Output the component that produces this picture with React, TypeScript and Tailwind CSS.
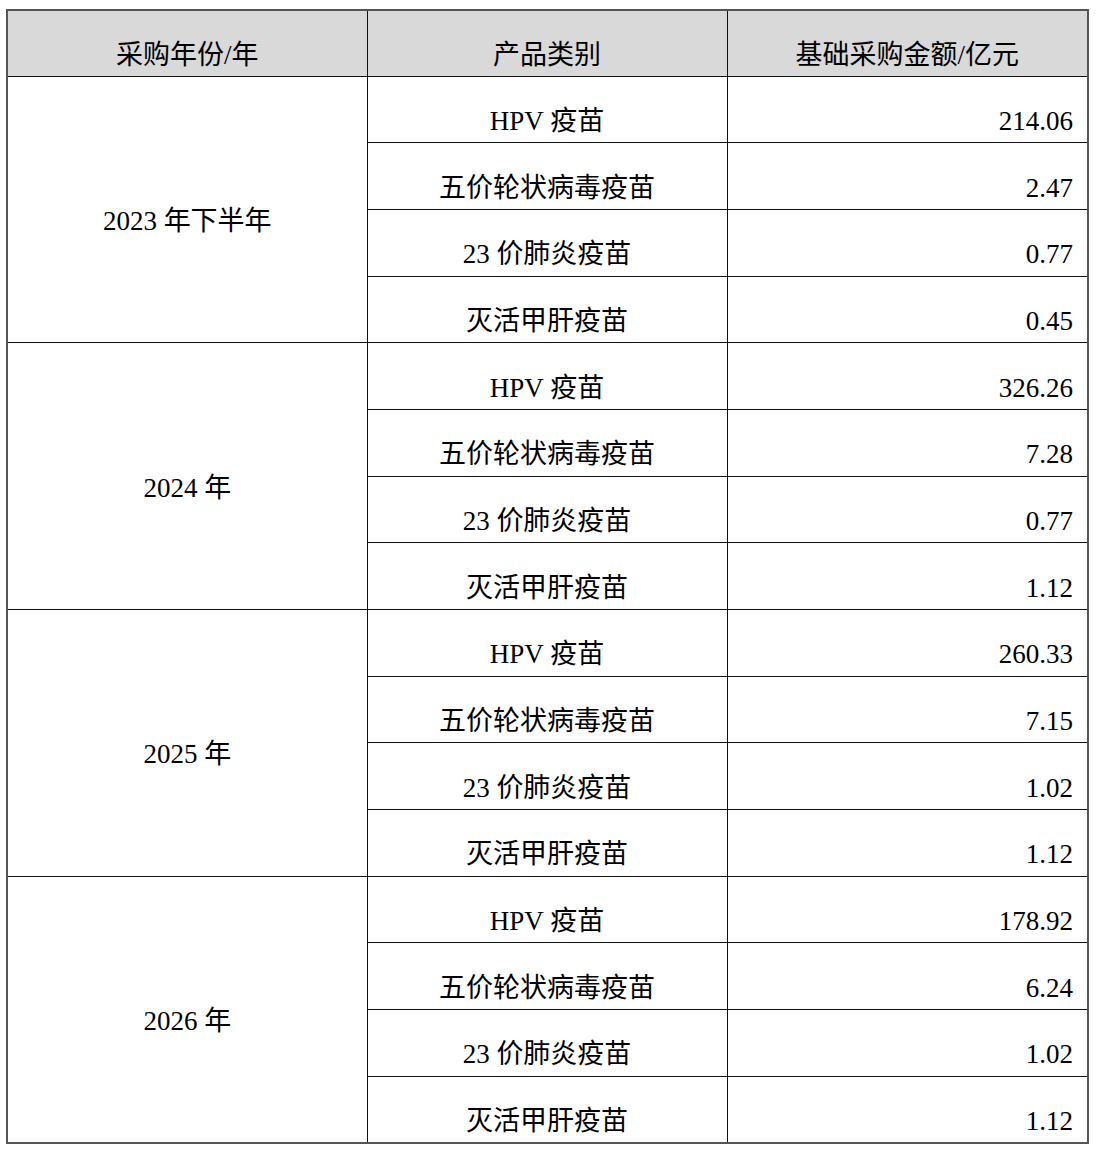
const data = [
  { year: '2023 年下半年', rows: ['214.06', '2.47', '0.77', '0.45'] },
  { year: '2024 年', rows: ['326.26', '7.28', '0.77', '1.12'] },
  { year: '2025 年', rows: ['260.33', '7.15', '1.02', '1.12'] },
  { year: '2026 年', rows: ['178.92', '6.24', '1.02', '1.12'] },
]

const products = ['HPV 疫苗', '五价轮状病毒疫苗', '23 价肺炎疫苗', '灭活甲肝疫苗']

function App() {
  return (
    <div className="bg-white min-h-screen pt-[9px] pl-[6px]">
      <table
        className="border-collapse border-2 border-[#555] text-[27px] leading-none text-black"
        style={{ fontFamily: '"Liberation Serif", "Noto Sans CJK SC", serif' }}
      >
        <colgroup>
          <col className="w-[360px]" />
          <col className="w-[360px]" />
          <col className="w-[361px]" />
        </colgroup>
        <thead>
          <tr className="h-[66px] bg-[#d9d9d9]">
            <th className="border border-[#111] pt-6 font-normal align-middle">采购年份/年</th>
            <th className="border border-[#111] pt-6 font-normal align-middle">产品类别</th>
            <th className="border border-[#111] pt-6 font-normal align-middle">基础采购金额/亿元</th>
          </tr>
        </thead>
        <tbody>
          {data.map((group) =>
            group.rows.map((amount, i) => (
              <tr key={group.year + i} className="h-[66.7px]">
                {i === 0 && (
                  <td rowSpan={4} className="border border-[#111] pt-6 text-center align-middle">
                    {group.year}
                  </td>
                )}
                <td className="border border-[#111] pt-6 text-center align-middle">{products[i]}</td>
                <td className="border border-[#111] pt-6 pr-[14px] text-right align-middle">{amount}</td>
              </tr>
            ))
          )}
        </tbody>
      </table>
    </div>
  )
}

export default App
